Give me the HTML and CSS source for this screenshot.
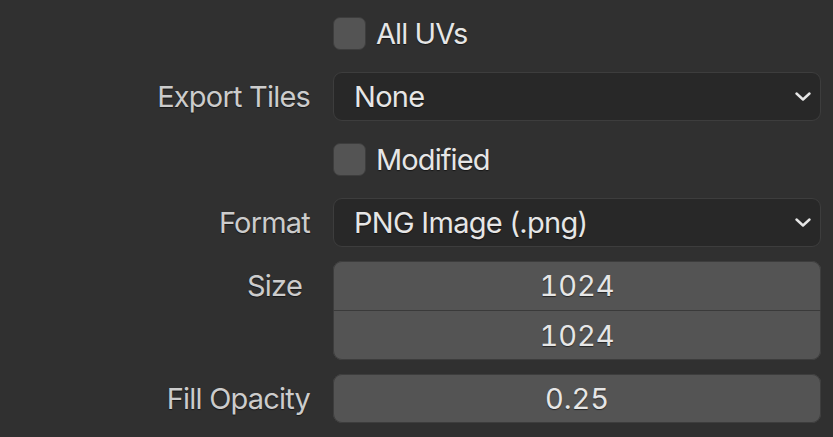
FILE: index.html
```html
<!DOCTYPE html>
<html>
<head>
<meta charset="utf-8">
<link rel="stylesheet" href="styles.css">
</head>
<body>
<div class="panel">
  <div class="label"></div>
  <div class="check-row"><span class="checkbox"></span><span class="check-text">All UVs</span></div>

  <div class="label">Export Tiles</div>
  <div class="dropdown"><span class="value">None</span>
    <svg class="chevron" width="16" height="9" viewBox="0 0 16 9"><path d="M1.5 1.5 L8 7.5 L14.5 1.5" fill="none" stroke="#e6e6e6" stroke-width="2.4" stroke-linecap="round" stroke-linejoin="round"/></svg>
  </div>

  <div class="label"></div>
  <div class="check-row"><span class="checkbox"></span><span class="check-text">Modified</span></div>

  <div class="label">Format</div>
  <div class="dropdown"><span class="value">PNG Image (.png)</span>
    <svg class="chevron" width="16" height="9" viewBox="0 0 16 9"><path d="M1.5 1.5 L8 7.5 L14.5 1.5" fill="none" stroke="#e6e6e6" stroke-width="2.4" stroke-linecap="round" stroke-linejoin="round"/></svg>
  </div>

  <div class="label label-size">Size</div>
  <div class="num-group">
    <div class="num-cell">1024</div>
    <div class="num-cell">1024</div>
  </div>

  <div class="label">Fill Opacity</div>
  <div class="num-group">
    <div class="num-cell">0.25</div>
  </div>
</div>
</body>
</html>
```
FILE: styles.css
```css
html, body {
  margin: 0;
  padding: 0;
  background: #303030;
}
body {
  width: 833px;
  height: 437px;
  overflow: hidden;
  font-family: Inter, "Noto Sans", sans-serif;
  font-size: 29px;
}
.panel {
  display: grid;
  grid-template-columns: 310px 488px;
  column-gap: 23px;
  row-gap: 14px;
  padding-top: 9px;
}
.label {
  height: 49px;
  display: flex;
  align-items: center;
  justify-content: flex-end;
  color: #cccccc;
  letter-spacing: -0.8px;
  text-shadow: 0 1px 1px rgba(0,0,0,0.55);
  white-space: nowrap;
}
.label-size {
  padding-right: 8px;
  align-self: start;
}
.check-row {
  height: 49px;
  display: flex;
  align-items: center;
  gap: 10px;
}
.checkbox {
  width: 33px;
  height: 33px;
  box-sizing: border-box;
  border-radius: 7px;
  background: #545454;
  border: 1px solid #3d3d3d;
}
.check-text {
  color: #e6e6e6;
  letter-spacing: -0.9px;
  text-shadow: 0 1px 1px rgba(0,0,0,0.55);
}
.dropdown {
  height: 49px;
  box-sizing: border-box;
  background: #282828;
  border: 1px solid #3d3d3d;
  border-radius: 9px;
  display: flex;
  align-items: center;
  justify-content: space-between;
  padding: 0 9px 0 20px;
}
.value {
  color: #e6e6e6;
  letter-spacing: -0.7px;
  text-shadow: 0 1px 1px rgba(0,0,0,0.55);
}
.chevron {
  display: block;
}
.num-group {
  background: #545454;
  border-radius: 9px;
  box-shadow: inset 0 0 0 1px #3d3d3d;
  display: flex;
  flex-direction: column;
  overflow: hidden;
}
.num-cell {
  height: 49px;
  display: flex;
  align-items: center;
  justify-content: center;
  color: #e6e6e6;
  font-variant-numeric: tabular-nums;
  font-feature-settings: "tnum" 1;
  text-shadow: 0 1px 1px rgba(0,0,0,0.55);
}
.num-cell + .num-cell {
  border-top: 1px solid #3a3a3a;
}
```
